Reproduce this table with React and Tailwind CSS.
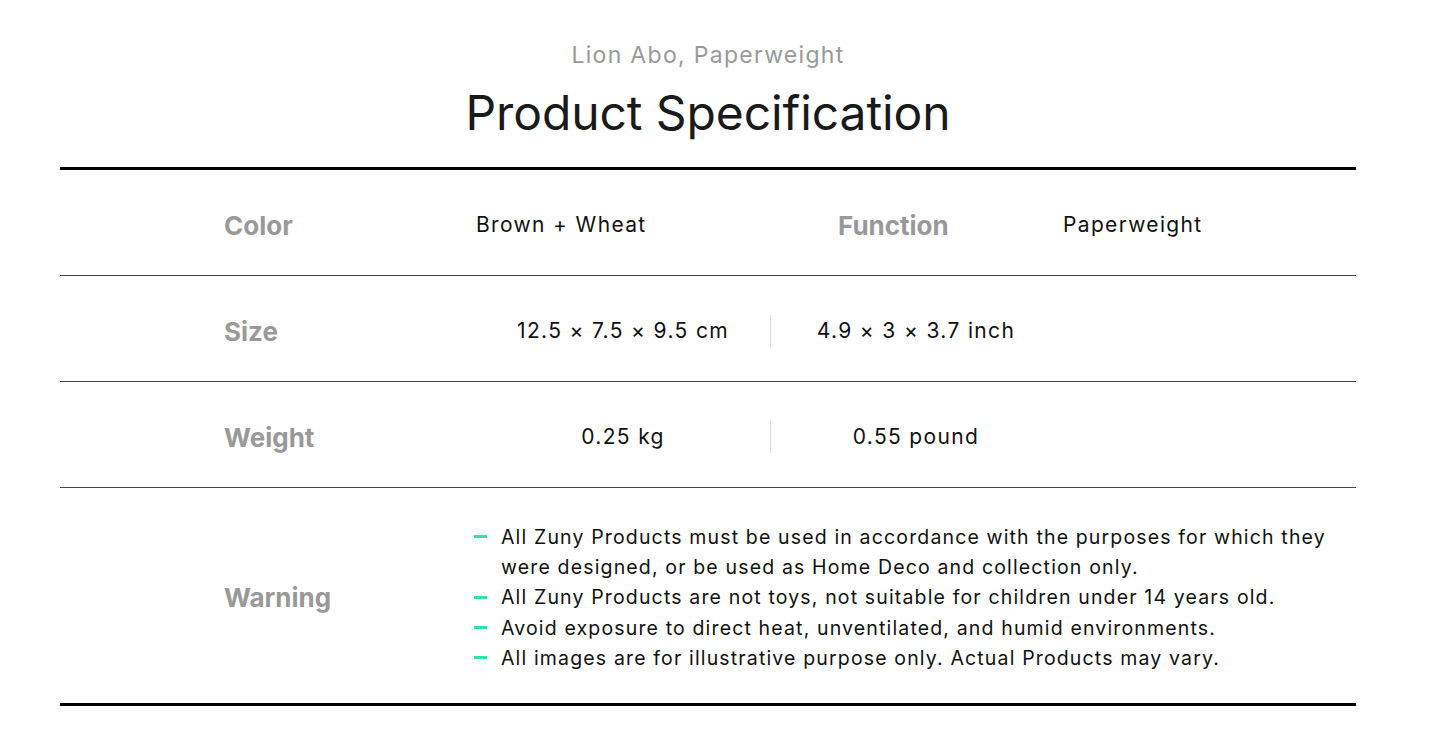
export default function App() {
  const font = { fontFamily: 'Inter, "Noto Sans", sans-serif' };
  const labelCls = "text-[26px] font-bold text-[#999999] tracking-[0px]";
  const valueCls = "text-[21px] text-[#111111] tracking-[1.35px]";
  const warnings = [
    "All Zuny Products must be used in accordance with the purposes for which they were designed, or be used as Home Deco and collection only.",
    "All Zuny Products are not toys, not suitable for children under 14 years old.",
    "Avoid exposure to direct heat, unventilated, and humid environments.",
    "All images are for illustrative purpose only. Actual Products may vary.",
  ];
  return (
    <div className="w-[1445px] h-[750px] bg-white" style={font}>
      <div className="mx-[60px] w-[1296px] flex flex-col items-center pt-[41px]">
        <div className="text-[23px] leading-[28px] text-[#999999] tracking-[1.3px]">Lion Abo, Paperweight</div>
        <h1 className="mt-[16px] text-[48px] leading-[56px] text-[#1a1a1a] tracking-[-0.1px]">Product Specification</h1>
      </div>
      <div className="mx-[60px] mt-[26px] w-[1296px] border-t-[3px] border-b-[3px] border-black">
        <div className="flex items-center h-[106px] pt-[5px] border-b-[1.5px] border-[#444444]">
          <div className={`w-[416px] pl-[164px] ${labelCls}`}>Color</div>
          <div className={`w-[362px] ${valueCls}`}>Brown + Wheat</div>
          <div className={`w-[225px] ${labelCls}`}>Function</div>
          <div className={valueCls}>Paperweight</div>
        </div>
        <div className="flex items-center h-[106px] pt-[5px] border-b-[1.5px] border-[#444444]">
          <div className={`w-[416px] pl-[164px] ${labelCls}`}>Size</div>
          <div className={`w-[294px] text-center ${valueCls}`}>12.5 × 7.5 × 9.5 cm</div>
          <div className="w-px h-[32px] bg-[#dddddd]" />
          <div className={`w-[290px] text-center ${valueCls}`}>4.9 × 3 × 3.7 inch</div>
        </div>
        <div className="flex items-center h-[106px] pt-[5px] border-b-[1.5px] border-[#444444]">
          <div className={`w-[416px] pl-[164px] ${labelCls}`}>Weight</div>
          <div className={`w-[294px] text-center ${valueCls}`}>0.25 kg</div>
          <div className="w-px h-[32px] bg-[#dddddd]" />
          <div className={`w-[290px] text-center ${valueCls}`}>0.55 pound</div>
        </div>
        <div className="flex items-center h-[215px] pt-[4px]">
          <div className={`w-[414px] pl-[164px] ${labelCls}`}>Warning</div>
          <ul className="flex-1 pr-[20px]">
            {warnings.map((w, i) => (
              <li key={i} className="flex text-[19.5px] leading-[30.2px] text-[#111111] tracking-[1.15px]">
                <span className="w-[27px] shrink-0 flex items-center h-[30px]">
                  <span className="block w-[13px] h-[3px] bg-[#2de3a8]" />
                </span>
                <span>{w}</span>
              </li>
            ))}
          </ul>
        </div>
      </div>
    </div>
  );
}
